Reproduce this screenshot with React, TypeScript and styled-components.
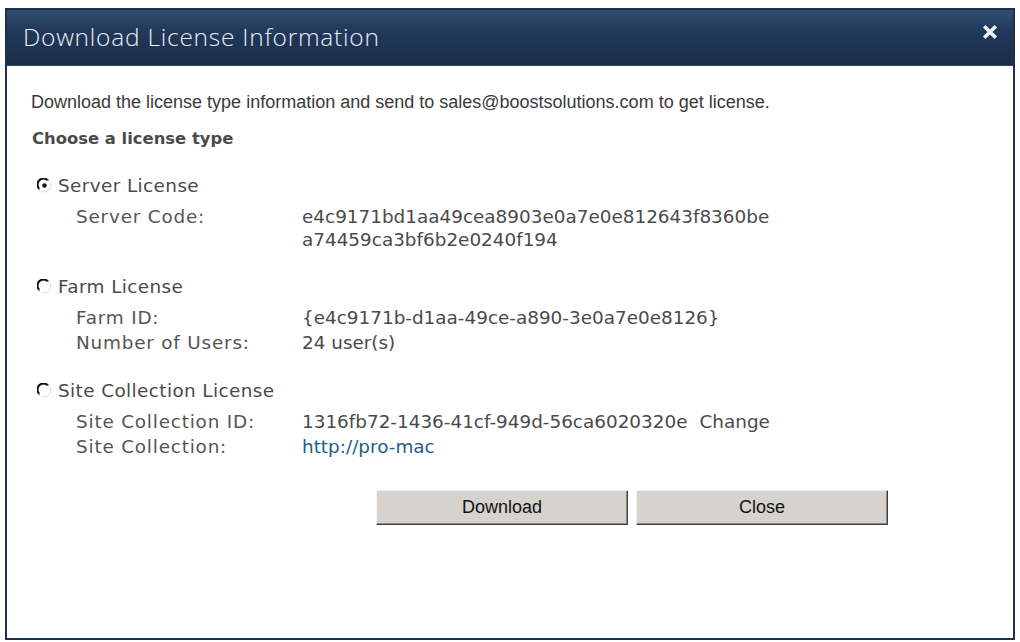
import styled, { createGlobalStyle } from 'styled-components';

const GlobalStyle = createGlobalStyle`
  html, body {
    margin: 0;
    padding: 0;
    background: #ffffff;
  }
  body {
    width: 1020px;
    height: 642px;
    overflow: hidden;
  }
`;

const Dialog = styled.div`
  box-sizing: border-box;
  width: 1010px;
  height: 632px;
  margin: 8px 0 0 5px;
  border: 2px solid #1c3150;
  display: flex;
  flex-direction: column;
  background: #ffffff;
`;

const TitleBar = styled.div`
  height: 55px;
  flex-shrink: 0;
  display: flex;
  align-items: center;
  justify-content: space-between;
  padding: 0 14px 0 16px;
  background: linear-gradient(#2f4f72 0%, #22395a 35%, #1b2e48 100%);
  border-bottom: 1px solid #2a4566;
`;

const Title = styled.h1`
  margin: -3px 0 0;
  font-family: 'Open Sans', 'DejaVu Sans', sans-serif;
  font-weight: 300;
  font-size: 24.5px;
  color: #e9eef4;
  letter-spacing: 0.75px;
`;

const CloseButton = styled.button`
  width: 18px;
  height: 18px;
  padding: 0;
  border: 0;
  background: transparent;
  margin-top: -10px;
  cursor: pointer;
`;

const Body = styled.div`
  flex: 1;
  padding: 26px 0 0 24px;
  display: flex;
  flex-direction: column;
`;

const Intro = styled.p`
  margin: 0;
  font-family: 'Liberation Sans', Tahoma, sans-serif;
  font-size: 18px;
  color: #3a3a3a;
`;

const Heading = styled.h2`
  margin: 16px 0 0 1px;
  font-family: 'DejaVu Sans', Tahoma, sans-serif;
  font-weight: bold;
  font-size: 16.4px;
  color: #4a4a4a;
`;

const Section = styled.div<{ $first?: boolean }>`
  margin-top: ${(p) => (p.$first ? '27px' : '25px')};
`;

const RadioRow = styled.label`
  display: flex;
  align-items: center;
  gap: 6px;
  padding-left: 6px;
  font-family: 'DejaVu Sans', Verdana, sans-serif;
  font-size: 18.4px;
  letter-spacing: 0.4px;
  color: #4a4a4a;
  cursor: pointer;
`;

const Fields = styled.div`
  display: grid;
  grid-template-columns: 226px 1fr;
  row-gap: 1px;
  padding-left: 45px;
  margin-top: 9px;
  font-family: 'DejaVu Sans', Verdana, sans-serif;
  font-size: 18.4px;
  line-height: 24px;
  color: #555555;
`;

const Label = styled.div`
  letter-spacing: 0.8px;
`;

const Value = styled.div`
  color: #4a4a4a;
`;

const CodeLine = styled.div`
  line-height: 23px;
`;

const Link = styled.a`
  color: #1f5e8a;
  text-decoration: none;
`;

const ChangeLink = styled.span`
  margin-left: 12px;
`;

const Buttons = styled.div`
  display: flex;
  gap: 8px;
  margin-top: 31px;
  padding-left: 345px;
`;

const Button = styled.button`
  width: 252px;
  height: 35px;
  box-sizing: border-box;
  background: #d6d3ce;
  border: 1px solid;
  border-color: #f4f3f0 #404040 #404040 #f4f3f0;
  box-shadow: inset -1px -1px 0 #8a8884;
  font-family: 'Liberation Sans', Tahoma, sans-serif;
  font-size: 18px;
  color: #111111;
  cursor: pointer;
`;

const Radio = ({ checked }: { checked?: boolean }) => (
  <svg width="15" height="15" viewBox="0 0 15 15">
    <circle cx="7.5" cy="7.5" r="6.5" fill="#ffffff" />
    <path d="M2.6 12 A6.4 6.4 0 0 1 12 2.6" stroke="#808080" strokeWidth="1.3" fill="none" />
    <path d="M2.2 10.6 A5.6 5.6 0 0 1 10.6 2.2" stroke="#141414" strokeWidth="2" fill="none" />
    <path d="M13 4.3 A6.4 6.4 0 0 1 4.3 13" stroke="#e2e2e2" strokeWidth="1.2" fill="none" />
    {checked && <circle cx="7.5" cy="7.5" r="2.2" fill="#111111" />}
  </svg>
);

const CloseIcon = () => (
  <svg width="16" height="16" viewBox="0 0 16 16">
    <path d="M3.5 3.5 L12.5 12.5 M12.5 3.5 L3.5 12.5" stroke="#eef2f6" strokeWidth="3.6" strokeLinecap="square" />
  </svg>
);

export default function App() {
  return (
    <>
      <GlobalStyle />
      <Dialog>
        <TitleBar>
          <Title>Download License Information</Title>
          <CloseButton aria-label="Close">
            <CloseIcon />
          </CloseButton>
        </TitleBar>
        <Body>
          <Intro>
            Download the license type information and send to sales@boostsolutions.com to get license.
          </Intro>
          <Heading>Choose a license type</Heading>

          <Section $first>
            <RadioRow>
              <Radio checked />
              Server License
            </RadioRow>
            <Fields>
              <Label>Server Code:</Label>
              <Value>
                <CodeLine>e4c9171bd1aa49cea8903e0a7e0e812643f8360be</CodeLine>
                <CodeLine>a74459ca3bf6b2e0240f194</CodeLine>
              </Value>
            </Fields>
          </Section>

          <Section>
            <RadioRow>
              <Radio />
              Farm License
            </RadioRow>
            <Fields>
              <Label>Farm ID:</Label>
              <Value>{'{e4c9171b-d1aa-49ce-a890-3e0a7e0e8126}'}</Value>
              <Label>Number of Users:</Label>
              <Value>24 user(s)</Value>
            </Fields>
          </Section>

          <Section>
            <RadioRow>
              <Radio />
              Site Collection License
            </RadioRow>
            <Fields>
              <Label>Site Collection ID:</Label>
              <Value>
                1316fb72-1436-41cf-949d-56ca6020320e
                <ChangeLink>Change</ChangeLink>
              </Value>
              <Label>Site Collection:</Label>
              <Value>
                <Link href="#">http://pro-mac</Link>
              </Value>
            </Fields>
          </Section>

          <Buttons>
            <Button>Download</Button>
            <Button>Close</Button>
          </Buttons>
        </Body>
      </Dialog>
    </>
  );
}
